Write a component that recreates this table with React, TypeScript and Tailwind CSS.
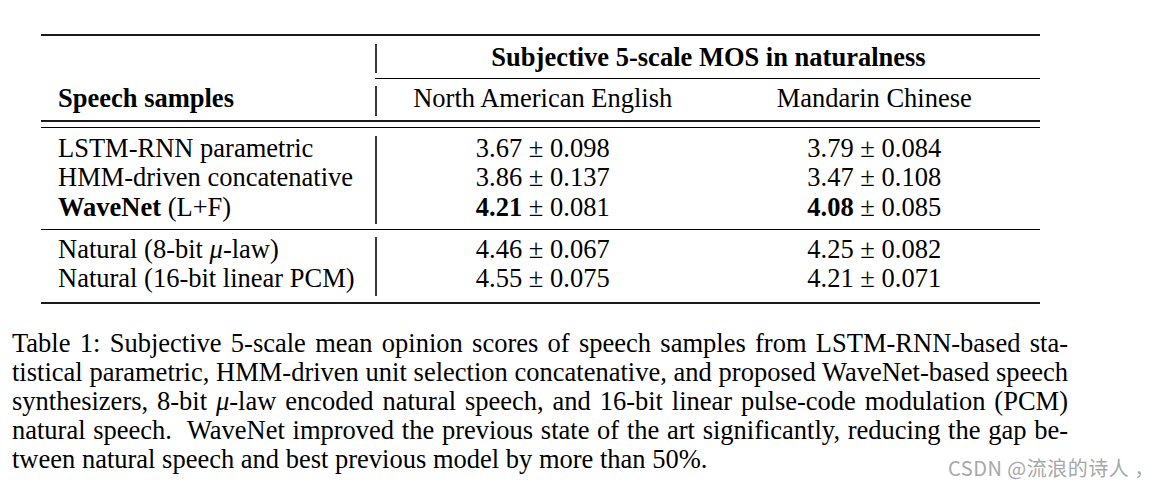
import React from "react";

type Row = { label: React.ReactNode; en: React.ReactNode; zh: React.ReactNode };

const sectionOne: Row[] = [
  { label: "LSTM-RNN parametric", en: "3.67 ± 0.098", zh: "3.79 ± 0.084" },
  { label: "HMM-driven concatenative", en: "3.86 ± 0.137", zh: "3.47 ± 0.108" },
  {
    label: (
      <>
        <b>WaveNet</b> (L+F)
      </>
    ),
    en: (
      <>
        <b>4.21</b> ± 0.081
      </>
    ),
    zh: (
      <>
        <b>4.08</b> ± 0.085
      </>
    ),
  },
];

const sectionTwo: Row[] = [
  {
    label: (
      <>
        Natural (8-bit <i>μ</i>-law)
      </>
    ),
    en: "4.46 ± 0.067",
    zh: "4.25 ± 0.082",
  },
  { label: "Natural (16-bit linear PCM)", en: "4.55 ± 0.075", zh: "4.21 ± 0.071" },
];

const captionLines = [
  "Table 1: Subjective 5-scale mean opinion scores of speech samples from LSTM-RNN-based sta-",
  "tistical parametric, HMM-driven unit selection concatenative, and proposed WaveNet-based speech",
  <>
    synthesizers, 8-bit <i>μ</i>-law encoded natural speech, and 16-bit linear pulse-code modulation (PCM)
  </>,
  "natural speech.  WaveNet improved the previous state of the art significantly, reducing the gap be-",
];

const Section = ({ rows, pt, pb, rowH }: { rows: Row[]; pt: string; pb: string; rowH: string }) => (
  <div className={`flex ${pt} ${pb}`}>
    <div className="w-[334px] pl-[17px]">
      {rows.map((r, i) => (
        <div key={i} className={`${rowH} whitespace-nowrap`}>
          {r.label}
        </div>
      ))}
    </div>
    <div className="flex-1 border-l-2 border-[#3a3a3a]">
      {rows.map((r, i) => (
        <div key={i} className={`grid grid-cols-2 text-center whitespace-nowrap ${rowH}`}>
          <div>{r.en}</div>
          <div>{r.zh}</div>
        </div>
      ))}
    </div>
  </div>
);

export default function App() {
  return (
    <div className="relative h-[490px] w-[1160px] overflow-hidden bg-white font-['Liberation_Serif','Times_New_Roman',serif] text-[26.5px] text-black">
      <div className="ml-[41px] w-[999px] pt-[34px]">
        <div className="h-[2px] bg-[#1a1a1a]" />

        <div className="flex pt-[8px] pb-[5px]">
          <div className="w-[334px]" />
          <div className="h-[29px] flex-1 border-l-2 border-[#3a3a3a] text-center font-bold leading-[27px] whitespace-nowrap">
            Subjective 5-scale MOS in naturalness
          </div>
        </div>
        <div className="ml-[334px] h-px bg-black" />

        <div className="flex h-[41px] pt-[7px] pb-[4px] leading-[25px]">
          <div className="w-[334px] pl-[17px] font-bold whitespace-nowrap">Speech samples</div>
          <div className="grid flex-1 grid-cols-2 border-l-2 border-[#3a3a3a] text-center whitespace-nowrap">
            <div>North American English</div>
            <div>Mandarin Chinese</div>
          </div>
        </div>

        <div className="h-[2px] bg-[#1a1a1a]" />
        <div className="h-[5px]" />
        <div className="h-px bg-black" />

        <Section rows={sectionOne} pt="pt-[8px]" pb="pb-[5px]" rowH="h-[29.33px] leading-[24px]" />
        <div className="h-px bg-black" />
        <Section rows={sectionTwo} pt="pt-[7px]" pb="pb-[6px]" rowH="h-[29.5px] leading-[24px]" />
        <div className="h-[2px] bg-[#1a1a1a]" />
      </div>

      <div className="mt-[25px] ml-[12px] w-[1056px] leading-[29px]">
        {captionLines.map((line, i) => (
          <div key={i} className="text-justify whitespace-pre-wrap [text-align-last:justify]">
            {line}
          </div>
        ))}
        <div className="text-left">tween natural speech and best previous model by more than 50%.</div>
      </div>

      <div className="absolute top-[454px] left-[948px] font-['Noto_Sans_CJK_SC','Noto_Sans',sans-serif] text-[20px] leading-[28px] tracking-[0.5px] text-[#a8a8a8] whitespace-pre">
        CSDN @流浪的诗人 ，
      </div>
    </div>
  );
}
